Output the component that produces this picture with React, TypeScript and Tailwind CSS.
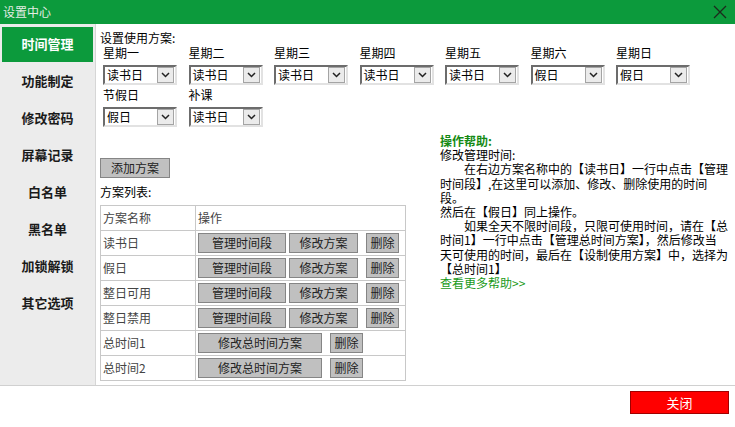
import React from "react";

const FONT = { fontFamily: '"Noto Sans CJK SC", "Noto Sans", sans-serif' };

const menu = ["时间管理", "功能制定", "修改密码", "屏幕记录", "白名单", "黑名单", "加锁解锁", "其它选项"];

const row1: [string, string][] = [
  ["星期一", "读书日"],
  ["星期二", "读书日"],
  ["星期三", "读书日"],
  ["星期四", "读书日"],
  ["星期五", "读书日"],
  ["星期六", "假日"],
  ["星期日", "假日"],
];
const row2: [string, string][] = [
  ["节假日", "假日"],
  ["补课", "读书日"],
];

const plans = [
  { name: "读书日", total: false },
  { name: "假日", total: false },
  { name: "整日可用", total: false },
  { name: "整日禁用", total: false },
  { name: "总时间1", total: true },
  { name: "总时间2", total: true },
];

function Select({ value }: { value: string }) {
  return (
    <div className="flex h-[20px] w-[74px] items-center border-2 border-t-[#6c6c6c] border-l-[#6c6c6c] border-b-[#e2e2e2] border-r-[#e2e2e2] bg-white">
      <span className="flex-1 pl-[2px] text-[12px] leading-[16px] text-black">{value}</span>
      <span className="mr-[1px] flex h-[16px] w-[17px] items-center justify-center border border-[#a4a4a4] bg-[#ebebeb]">
        <svg width="9" height="6" viewBox="0 0 9 6">
          <path d="M1 1 L4.5 4.5 L8 1" fill="none" stroke="#222" strokeWidth="1.5" />
        </svg>
      </span>
    </div>
  );
}

function Btn({ w, children }: { w: string; children: React.ReactNode }) {
  return (
    <div
      className={`flex h-[20px] items-center justify-center border border-[#858585] bg-[#c0c0c0] text-[12px] leading-[14px] text-[#222] ${w}`}
    >
      {children}
    </div>
  );
}

function DayGroup({ items }: { items: [string, string][] }) {
  return (
    <div className="grid grid-cols-[repeat(7,85.5px)] pl-[7px]">
      {items.map(([label, value]) => (
        <div key={label} className="flex flex-col">
          <div className="h-[16px] text-[12px] leading-[16px] text-black">{label}</div>
          <div className="mt-[4px]">
            <Select value={value} />
          </div>
        </div>
      ))}
    </div>
  );
}

export default function App() {
  return (
    <div className="flex h-[427px] w-[735px] flex-col bg-white" style={FONT}>
      {/* title bar */}
      <div className="flex h-[24px] items-center justify-between bg-[#0c9a3c] pl-[3px] pr-[8px]">
        <span className="text-[12px] leading-[14px] text-[#e4ece4]">设置中心</span>
        <svg width="14" height="14" viewBox="0 0 14 14">
          <path d="M1 1 L13 13 M13 1 L1 13" stroke="#1c2a1c" strokeWidth="1.3" />
        </svg>
      </div>

      {/* main */}
      <div className="flex h-[362px] border-b border-[#d0d0d0]">
        {/* sidebar */}
        <div className="flex w-[96px] flex-col gap-[2px] border-r border-[#d6d6d6] bg-[#ececec] px-[2px] pt-[3px]">
          {menu.map((m, i) => (
            <div
              key={m}
              className={`flex h-[35px] items-center justify-center pb-[2px] text-[13px] leading-[16px] font-bold ${
                i === 0 ? "bg-[#0c9a3c] text-white" : "text-[#1a1a1a]"
              }`}
            >
              {m}
            </div>
          ))}
        </div>

        {/* content */}
        <div className="flex flex-1 flex-col pt-[6px]">
          <div className="h-[15px] pl-[4px] text-[12px] leading-[15px] text-black">设置使用方案:</div>
          <DayGroup items={row1} />
          <div className="mt-[2px]">
            <DayGroup items={row2} />
          </div>

          <div className="mt-[7px] flex">
            <div className="flex w-[344px] flex-col pl-[4px] pt-[24px]">
              <Btn w="w-[70px]">添加方案</Btn>
              <div className="mt-[6px] h-[16px] text-[12px] leading-[16px] text-black">方案列表:</div>
              <div className="mt-[5px] w-[306px] border-l border-t border-[#c8c8c8] text-[12px] text-[#444]">
                <div className="flex h-[25px]">
                  <div className="flex w-[95px] items-center border-b border-r border-[#c8c8c8] pl-[2px]">方案名称</div>
                  <div className="flex flex-1 items-center border-b border-r border-[#c8c8c8] pl-[2px]">操作</div>
                </div>
                {plans.map((p) => (
                  <div key={p.name} className="flex h-[25px]">
                    <div className="flex w-[95px] items-center border-b border-r border-[#c8c8c8] pl-[2px]">{p.name}</div>
                    <div className="flex flex-1 items-center border-b border-r border-[#c8c8c8] pl-[2px]">
                      {p.total ? (
                        <div className="flex items-center gap-[8px]">
                          <Btn w="w-[124px]">修改总时间方案</Btn>
                          <Btn w="w-[33px]">删除</Btn>
                        </div>
                      ) : (
                        <div className="flex items-center">
                          <Btn w="w-[88px]">管理时间段</Btn>
                          <div className="ml-[3px]">
                            <Btn w="w-[69px]">修改方案</Btn>
                          </div>
                          <div className="ml-[8px]">
                            <Btn w="w-[33px]">删除</Btn>
                          </div>
                        </div>
                      )}
                    </div>
                  </div>
                ))}
              </div>
            </div>

            <div className="flex flex-col whitespace-nowrap text-[12px] leading-[14.2px] text-black">
              <div className="font-bold text-[#148a14]">操作帮助:</div>
              <div>修改管理时间:</div>
              <div className="pl-[24px]">在右边方案名称中的【读书日】一行中点击【管理</div>
              <div>时间段】,在这里可以添加、修改、删除使用的时间</div>
              <div>段。</div>
              <div>然后在【假日】同上操作。</div>
              <div className="pl-[24px]">如果全天不限时间段，只限可使用时间，请在【总</div>
              <div>时间1】一行中点击【管理总时间方案】，然后修改当</div>
              <div>天可使用的时间，最后在【设制使用方案】中，选择为</div>
              <div>【总时间1】</div>
              <div className="text-[#1a9a1a]">查看更多帮助&gt;&gt;</div>
            </div>
          </div>
        </div>
      </div>

      {/* footer */}
      <div className="flex flex-1 justify-end pr-[6px] pt-[5px]">
        <div className="flex h-[23px] w-[99px] items-center justify-center border border-[#a00000] bg-[#ff0000] text-[13px] leading-[14px] text-white">
          关闭
        </div>
      </div>
    </div>
  );
}
